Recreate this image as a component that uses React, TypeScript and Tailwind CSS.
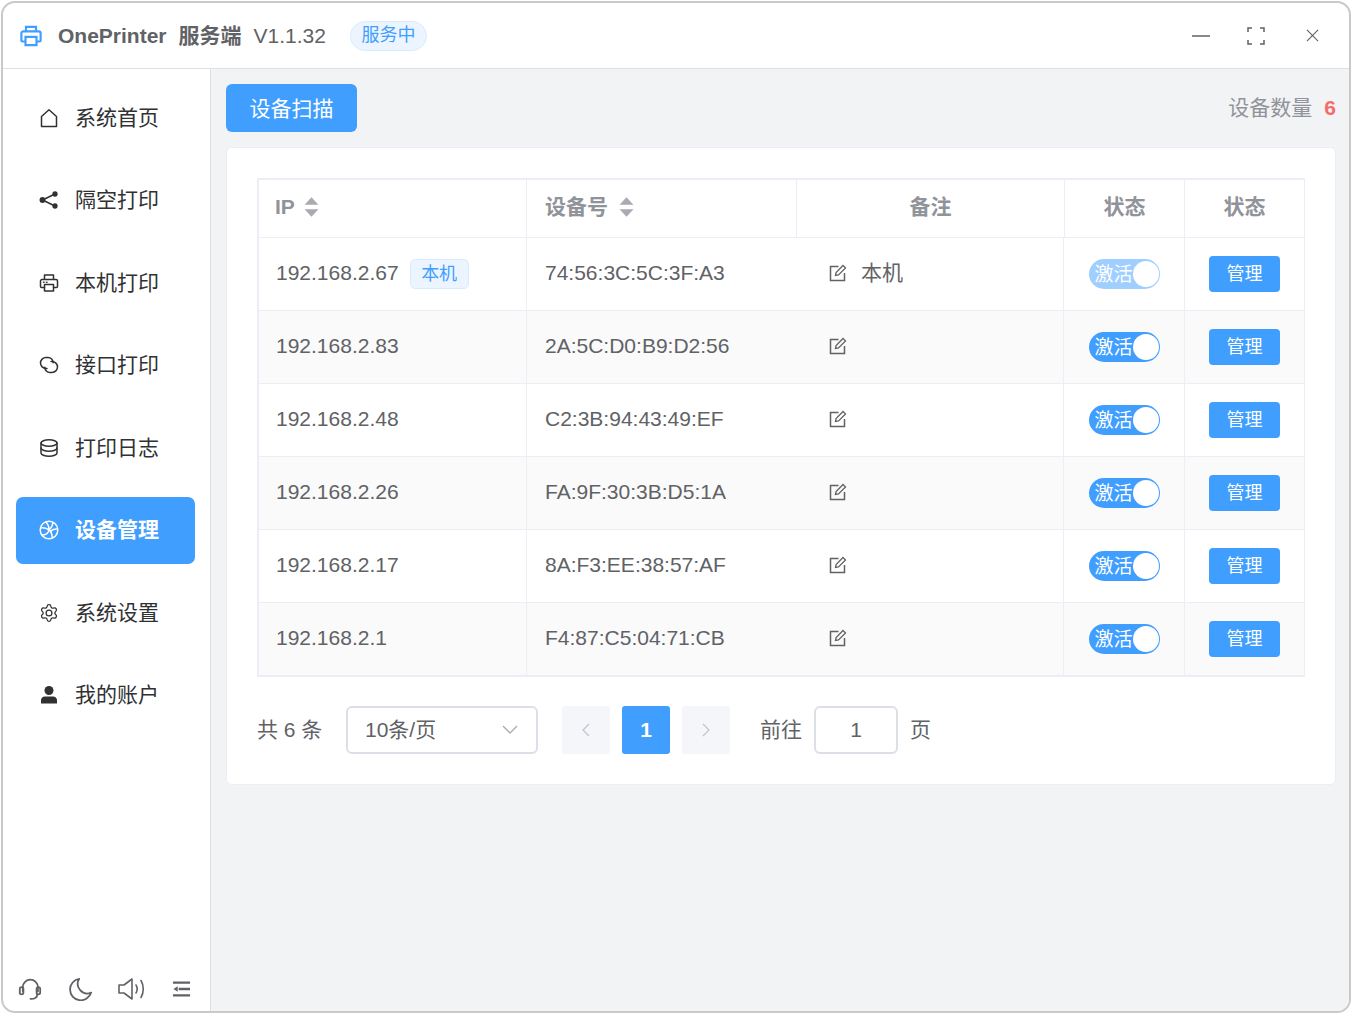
import type { ReactNode } from "react";

const FONT = "font-['Liberation_Sans','Noto_Sans_CJK_SC',sans-serif]";

const rows = [
  { ip: "192.168.2.67", mac: "74:56:3C:5C:3F:A3", note: "本机", self: true },
  { ip: "192.168.2.83", mac: "2A:5C:D0:B9:D2:56", note: "" },
  { ip: "192.168.2.48", mac: "C2:3B:94:43:49:EF", note: "" },
  { ip: "192.168.2.26", mac: "FA:9F:30:3B:D5:1A", note: "" },
  { ip: "192.168.2.17", mac: "8A:F3:EE:38:57:AF", note: "" },
  { ip: "192.168.2.1", mac: "F4:87:C5:04:71:CB", note: "" },
];

function Icon({ children, className = "" }: { children: ReactNode; className?: string }) {
  return (
    <svg
      viewBox="0 0 20 20"
      fill="none"
      stroke="currentColor"
      strokeWidth="1.5"
      strokeLinecap="round"
      strokeLinejoin="round"
      className={className}
    >
      {children}
    </svg>
  );
}

const menu: { label: string; icon: ReactNode; active?: boolean }[] = [
  { label: "系统首页", icon: <path d="M2.500 8.500 10 1.800l7.500 6.700V18.500h-15z" /> },
  {
    label: "隔空打印",
    icon: (
      <g fill="currentColor" stroke="currentColor">
        <circle cx="3.500" cy="10" r="2.200" />
        <circle cx="16" cy="4" r="1.900" />
        <circle cx="16" cy="16" r="1.900" />
        <path d="M3.500 10 16 4M3.500 10 16 16" />
      </g>
    ),
  },
  {
    label: "本机打印",
    icon: (
      <g>
        <path d="M5.500 6.500V2h9v4.500M5.500 14.500H2.500a1 1 0 0 1-1-1V8A1.500 1.500 0 0 1 3 6.500h14A1.500 1.500 0 0 1 18.500 8v5.500a1 1 0 0 1-1 1h-3" />
        <path d="M5.500 11.500h9v6.500h-9zM4.500 9.300h.5M7.500 9.300h.5" />
      </g>
    ),
  },
  {
    label: "接口打印",
    icon: (
      <g>
        <path d="M8 13.500H7A5.200 5.200 0 0 1 7 2.500h2a5.200 5.200 0 0 1 5.200 5.200" />
        <path d="M12 6.500h1a5.200 5.200 0 0 1 0 11h-2a5.200 5.200 0 0 1-5.200-5.200" />
      </g>
    ),
  },
  {
    label: "打印日志",
    icon: (
      <g>
        <ellipse cx="10" cy="5" rx="8" ry="3.200" />
        <path d="M2 5v10c0 1.800 3.600 3.200 8 3.200s8-1.400 8-3.200V5" />
        <path d="M2 10c0 1.800 3.600 3.200 8 3.200s8-1.400 8-3.200" />
      </g>
    ),
  },
  {
    label: "设备管理",
    active: true,
    icon: (
      <g>
        <circle cx="10" cy="10" r="8.800" />
        <path d="M7 2c2.500 3 3.500 6.500 2.500 9.500-.8 2-3 3.500-6.500 3.500" />
        <path d="M1.500 8c3-.5 5.500 0 8 1.500s3.500 4 3.800 8" />
        <path d="M14 2.500c-.5 3-1.500 5.500-3.500 7M18.500 9c-2.500-.2-5 .5-6.500 2" />
      </g>
    ),
  },
  {
    label: "系统设置",
    icon: (
      <g transform="scale(0.8333)">
        <path d="M9.671 4.136a2.34 2.34 0 0 1 4.659 0 2.34 2.34 0 0 0 3.319 1.915 2.34 2.34 0 0 1 2.33 4.033 2.34 2.34 0 0 0 0 3.831 2.34 2.34 0 0 1-2.33 4.033 2.34 2.34 0 0 0-3.319 1.915 2.34 2.34 0 0 1-4.659 0 2.34 2.34 0 0 0-3.32-1.915 2.34 2.34 0 0 1-2.33-4.033 2.34 2.34 0 0 0 0-3.831A2.34 2.34 0 0 1 6.350 6.051a2.34 2.34 0 0 0 3.320-1.915" />
        <circle cx="12" cy="12" r="3.500" />
      </g>
    ),
  },
  {
    label: "我的账户",
    icon: (
      <g fill="currentColor" stroke="none">
        <circle cx="10" cy="5.500" r="4.500" />
        <path d="M2 18.500V15a4 4 0 0 1 4-3.500h8a4 4 0 0 1 4 3.500v3.500z" />
      </g>
    ),
  },
];

function SortCaret() {
  return (
    <svg viewBox="0 0 14 18" className="h-[20px] w-[15px]" fill="#a8abb2">
      <path d="M7 0l6.500 7H.5zM7 18l-6.500-7h13z" />
    </svg>
  );
}

function EditIcon() {
  return (
    <svg viewBox="0 0 18 18" fill="none" stroke="#606266" strokeWidth="1.500" className="mb-[2px] h-[18px] w-[18px]">
      <path d="M9.500 2.500H1.500v14h14V9" />
      <path d="M6.500 11.500l.6-3L14 1.500 16.500 4l-7 7z" strokeWidth="1.300" />
    </svg>
  );
}

function Toggle({ dim }: { dim?: boolean }) {
  return (
    <div
      className={`flex h-[30px] w-[71px] items-center justify-between rounded-full pl-[6px] pr-[2px] ${
        dim ? "bg-[#a0cfff]" : "bg-[#409eff]"
      }`}
    >
      <span className="whitespace-nowrap text-[19px] leading-none text-white">激活</span>
      <span className="h-[26px] w-[26px] shrink-0 rounded-full bg-white" />
    </div>
  );
}

export default function App() {
  return (
    <div className={`h-[1015px] w-[1352px] bg-white p-px ${FONT}`}>
      <div className="flex h-[1012px] w-[1350px] flex-col overflow-hidden rounded-[14px] border-2 border-[#c9c9c9] bg-white text-[21px] text-[#606266]">
        {/* 标题栏 */}
        <header className="flex h-[66px] shrink-0 items-center border-b border-[#dcdfe6] pl-[17px] pr-[30px]">
          <svg viewBox="0 0 24 24" fill="none" stroke="#409eff" strokeWidth="2.400" className="h-[22px] w-[22px]">
            <path d="M6.500 7V2h11v5" />
            <path d="M6 18H2.500a1 1 0 0 1-1-1V9a2 2 0 0 1 2-2h17a2 2 0 0 1 2 2v8a1 1 0 0 1-1 1H18" />
            <path d="M6 13h12v9H6z" />
          </svg>
          <span className="ml-[16px] font-bold">OnePrinter</span>
          <span className="ml-[12px] font-bold">服务端</span>
          <span className="ml-[12px]">V1.1.32</span>
          <span className="ml-[24px] flex h-[30px] w-[77px] items-center justify-center rounded-full border border-[#d9ecff] bg-[#ecf5ff] text-[18px] text-[#409eff]">
            服务中
          </span>
          <div className="ml-auto flex items-center text-[#606266]">
            <svg viewBox="0 0 18 18" className="h-[18px] w-[18px]" stroke="currentColor" strokeWidth="1.300">
              <path d="M0 9h18" />
            </svg>
            <svg viewBox="0 0 18 18" fill="none" className="ml-[37px] h-[18px] w-[18px]" stroke="currentColor" strokeWidth="1.500">
              <path d="M1 5V1h4M13 1h4v4M17 13v4h-4M5 17H1v-4" />
            </svg>
            <svg viewBox="0 0 14 14" fill="none" className="ml-[41px] h-[13px] w-[13px]" stroke="currentColor" strokeWidth="1.200">
              <path d="M1 1l12 12M13 1 1 13" />
            </svg>
          </div>
        </header>

        <div className="flex min-h-0 flex-1">
          {/* 侧边栏 */}
          <aside className="flex w-[208px] shrink-0 flex-col border-r border-[#dcdfe6]">
            <nav className="flex flex-col gap-[15.500px] pl-[13px] pr-[14px] pt-[15px]">
              {menu.map((m) => (
                <div
                  key={m.label}
                  className={`flex h-[67px] w-[179px] items-center rounded-[7px] pl-[23px] ${
                    m.active ? "bg-[#409eff] font-bold text-white" : "text-[#303133]"
                  }`}
                >
                  <Icon className={`h-[20px] w-[20px] shrink-0 ${m.active ? "text-white" : "text-[#303133]"}`}>
                    {m.icon}
                  </Icon>
                  <span className="ml-[16px]">{m.label}</span>
                </div>
              ))}
            </nav>
            <div className="mt-auto flex items-center pb-[10px] pl-[15px] text-[#606266]">
              <Icon className="h-[24px] w-[24px]">
                <path d="M4 12V8.500a6.300 6.300 0 0 1 12.600 0V12" />
                <rect x="1.500" y="8.500" width="3" height="6" rx="1.500" />
                <rect x="15.500" y="8.500" width="3" height="6" rx="1.500" />
                <path d="M16 14.500c0 2.500-2.500 3.800-5.500 3.800" />
              </Icon>
              <Icon className="ml-[27px] h-[24px] w-[24px]">
                <path d="M8.500 1.500A9 9 0 1 0 18.500 13 8 8 0 0 1 8.500 1.500z" />
              </Icon>
              <svg viewBox="0 0 28 22" fill="none" stroke="currentColor" strokeWidth="1.600" className="ml-[25px] h-[22px] w-[28px]">
                <path d="M1 7h5l8-6v20l-8-6H1z" strokeLinejoin="round" />
                <path d="M18 7c1.500 2.500 1.500 5.500 0 8M23 2.500c3 5 3 12 0 17" strokeLinecap="round" />
              </svg>
              <svg viewBox="0 0 20 18" className="ml-[26px] h-[18px] w-[19px]" fill="#606266">
                <path d="M1 1h18v2.600H1zM7 7.700h12v2.600H7zM1 14.400h18V17H1zM6 6v6L1.500 9z" />
              </svg>
            </div>
          </aside>

          {/* 主内容 */}
          <main className="min-w-0 flex-1 bg-[#f2f3f5] pl-[15px] pr-[13px] pt-[15px]">
            <div className="flex h-[48px] items-center justify-between">
              <button
                type="button"
                className="flex h-[48px] w-[131px] items-center justify-center rounded-[6px] bg-[#409eff] pt-[1px] text-white"
              >
                设备扫描
              </button>
              <div className="flex items-center text-[#909399]">
                <span>设备数量</span>
                <span className="ml-[12px] font-bold text-[#f56c6c]">6</span>
              </div>
            </div>

            <section className="mt-[15px] h-[638px] rounded-[6px] border border-[#ebeef5] bg-white pl-[30px] pr-[30px] pt-[30px]">
              <div className="w-[1048px] border-b-[2px] border-l-[2px] border-r border-t-[2px] border-[#ebeef5]">
                {/* 表头 */}
                <div className="grid h-[58px] grid-cols-[268px_270px_268px_120px_119px] border-b border-[#ebeef5] font-bold text-[#909399]">
                  <div className="flex items-center gap-[9px] border-r border-[#ebeef5] pb-[3px] pl-[16px]">
                    IP <SortCaret />
                  </div>
                  <div className="flex items-center gap-[11px] border-r border-[#ebeef5] pb-[3px] pl-[18px]">
                    设备号 <SortCaret />
                  </div>
                  <div className="flex items-center justify-center border-r border-[#ebeef5] pb-[3px]">备注</div>
                  <div className="flex items-center justify-center border-r border-[#ebeef5] pb-[3px]">状态</div>
                  <div className="flex items-center justify-center pb-[3px]">状态</div>
                </div>
                {/* 表体 */}
                {rows.map((r, i) => (
                  <div
                    key={r.ip}
                    className={`grid grid-cols-[268px_537px_121px_119px] items-stretch ${
                      i % 2 === 1 ? "bg-[#fafafa]" : "bg-white"
                    } ${i < rows.length - 1 ? "h-[73px] border-b border-[#ebeef5]" : "h-[72px]"}`}
                  >
                    <div className="flex items-center border-r border-[#ebeef5] pl-[17px]">
                      <span className="pb-[2px]">{r.ip}</span>
                      {r.self && (
                        <span className="ml-[11px] flex h-[30px] w-[59px] items-center justify-center rounded-[5px] border border-[#d9ecff] bg-[#ecf5ff] text-[18px] text-[#409eff]">
                          本机
                        </span>
                      )}
                    </div>
                    <div className="grid grid-cols-[284px_1fr] border-r border-[#ebeef5] pl-[18px]">
                      <div className="flex items-center pb-[2px]">{r.mac}</div>
                      <div className="flex items-center">
                        <EditIcon />
                        {r.note && <span className="ml-[14px] pb-[2px]">{r.note}</span>}
                      </div>
                    </div>
                    <div className="flex items-center justify-center border-r border-[#ebeef5]">
                      <Toggle dim={r.self} />
                    </div>
                    <div className="flex items-center justify-center">
                      <button
                        type="button"
                        className="flex h-[36px] w-[71px] items-center justify-center rounded-[4px] bg-[#409eff] text-[18px] text-white"
                      >
                        管理
                      </button>
                    </div>
                  </div>
                ))}
              </div>

              {/* 分页 */}
              <div className="mt-[29px] flex h-[48px] items-center">
                <span className="w-[66px] whitespace-nowrap">共 6 条</span>
                <div className="ml-[23px] flex h-[48px] w-[192px] items-center justify-between rounded-[6px] border-2 border-[#dcdfe6] pl-[17px] pr-[18px]">
                  <span>10条/页</span>
                  <svg viewBox="0 0 16 10" fill="none" stroke="#a8abb2" strokeWidth="1.300" className="h-[10px] w-[16px]">
                    <path d="M1 1l7 7 7-7" />
                  </svg>
                </div>
                <div className="ml-[24px] flex h-[48px] w-[48px] items-center justify-center rounded-[3px] bg-[#f5f6fa]">
                  <svg viewBox="0 0 8 14" fill="none" stroke="#c0c4cc" strokeWidth="1.200" className="h-[14px] w-[8px]">
                    <path d="M7 1 1 7l6 6" />
                  </svg>
                </div>
                <div className="ml-[12px] flex h-[48px] w-[48px] items-center justify-center rounded-[3px] bg-[#409eff] font-bold text-white">
                  1
                </div>
                <div className="ml-[12px] flex h-[48px] w-[48px] items-center justify-center rounded-[3px] bg-[#f5f6fa]">
                  <svg viewBox="0 0 8 14" fill="none" stroke="#c0c4cc" strokeWidth="1.200" className="h-[14px] w-[8px]">
                    <path d="M1 1l6 6-6 6" />
                  </svg>
                </div>
                <span className="ml-[30px]">前往</span>
                <div className="ml-[12px] flex h-[48px] w-[84px] items-center justify-center rounded-[6px] border-2 border-[#dcdfe6]">
                  1
                </div>
                <span className="ml-[12px]">页</span>
              </div>
            </section>
          </main>
        </div>
      </div>
    </div>
  );
}
